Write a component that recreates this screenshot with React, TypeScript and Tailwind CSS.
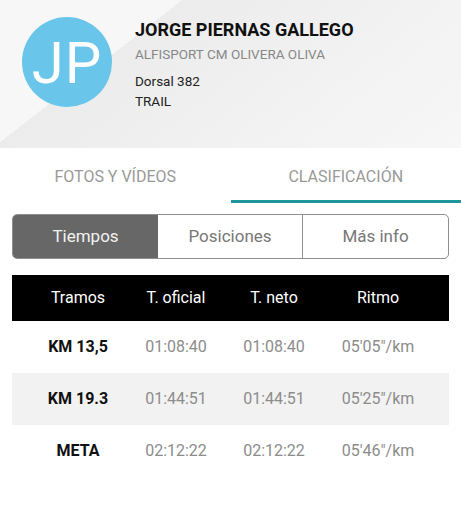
import React from 'react';

interface Split {
    tramo: string;
    oficial: string;
    neto: string;
    ritmo: string;
}

const splits: Split[] = [
    { tramo: 'KM 13,5', oficial: '01:08:40', neto: '01:08:40', ritmo: '05\'05"/km' },
    { tramo: 'KM 19.3', oficial: '01:44:51', neto: '01:44:51', ritmo: '05\'25"/km' },
    { tramo: 'META', oficial: '02:12:22', neto: '02:12:22', ritmo: '05\'46"/km' },
];

const cols = 'grid grid-cols-[98px_98px_98px_110px] pl-[17px] items-center text-center';

export default function App() {
    return (
        <div className="w-[461px] h-[512px] bg-white font-['Roboto','Liberation_Sans',sans-serif] overflow-hidden">
            {/* header */}
            <div className="h-[148px] flex items-start pt-[17px] pl-[22px] bg-[linear-gradient(142deg,#f7f7f7_28%,#ececec_28%,#f7f7f7_100%)]">
                <div className="w-[90px] h-[90px] rounded-full bg-[#69c5ea] flex items-center justify-center shrink-0">
                    <span className="text-white text-[58px] font-normal leading-none tracking-[1px] mt-[2px]">JP</span>
                </div>
                <div className="ml-[23px] pt-[1px]">
                    <h1 className="text-[18px] font-bold text-[#111] leading-[24px]">JORGE PIERNAS GALLEGO</h1>
                    <p className="text-[13.5px] text-[#888] leading-[20px] mt-[2px]">ALFISPORT CM OLIVERA OLIVA</p>
                    <p className="text-[13.5px] text-[#222] leading-[20px] mt-[7px]">Dorsal 382</p>
                    <p className="text-[13.5px] text-[#222] leading-[20px]">TRAIL</p>
                </div>
            </div>

            {/* tabs */}
            <div className="flex h-[55px]">
                <div className="flex-1 flex items-center justify-center text-[16px] text-[#999] pt-[3px]">FOTOS Y VÍDEOS</div>
                <div className="flex-1 flex flex-col">
                    <div className="flex-1 flex items-center justify-center text-[16px] text-[#999] pt-[5px]">CLASIFICACIÓN</div>
                    <div className="h-[3px] bg-[#1f959d]" />
                </div>
            </div>

            {/* segmented control */}
            <div className="mx-[12px] mt-[11px] h-[45px] flex border-[1.5px] border-[#8f8f8f] rounded-[5px] overflow-hidden text-[17px]">
                <div className="w-[145px] bg-[#676767] text-[#f2f2f2] flex items-center justify-center">Tiempos</div>
                <div className="w-[145px] border-r-[1.5px] border-[#8f8f8f] text-[#777] flex items-center justify-center">Posiciones</div>
                <div className="flex-1 text-[#777] flex items-center justify-center">Más info</div>
            </div>

            {/* table */}
            <div className="mx-[12px] mt-[16px]">
                <div className={`${cols} h-[46px] bg-black text-white text-[16px]`}>
                    <span>Tramos</span>
                    <span>T. oficial</span>
                    <span>T. neto</span>
                    <span>Ritmo</span>
                </div>
                {splits.map((s, i) => (
                    <div key={s.tramo} className={`${cols} h-[52px] text-[16px] ${i % 2 === 1 ? 'bg-[#f2f2f2]' : 'bg-white'}`}>
                        <span className="font-bold text-[#111]">{s.tramo}</span>
                        <span className="text-[#8c8c8c]">{s.oficial}</span>
                        <span className="text-[#8c8c8c]">{s.neto}</span>
                        <span className="text-[#8c8c8c]">{s.ritmo}</span>
                    </div>
                ))}
            </div>
        </div>
    );
}
